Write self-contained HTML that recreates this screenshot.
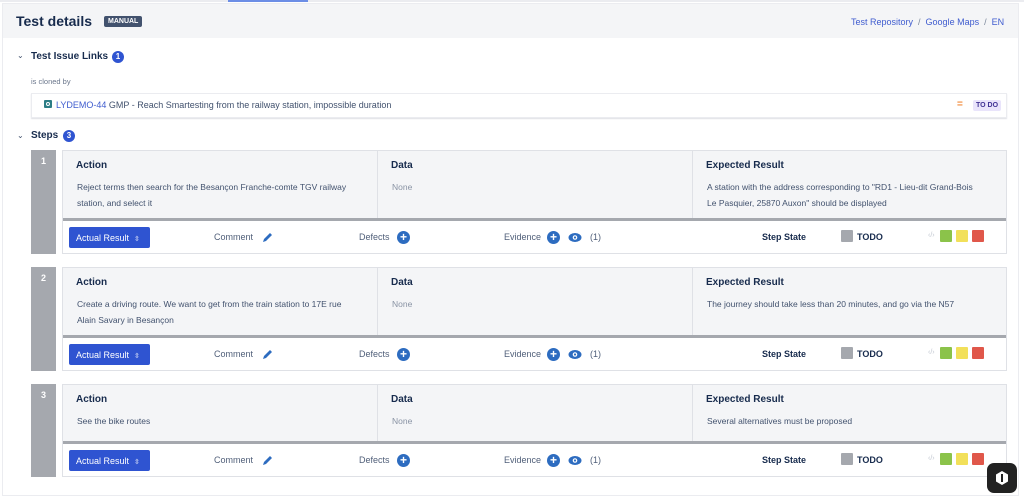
<!DOCTYPE html>
<html><head><meta charset="utf-8"><style>
*{box-sizing:border-box;margin:0;padding:0}
body{width:1024px;height:500px;background:#fff;font-family:"Liberation Sans",sans-serif;color:#172b4d;position:relative;overflow:hidden}
.a{position:absolute}
.topline{left:0;top:0;width:1024px;height:2px;background:#ebecf0}
.bluel{left:228px;top:0;width:80px;height:2px;background:#6c8ee6}
.wrap{left:2px;top:3px;width:1017px;height:493px;border:1px solid #ebecf0}
.hdr{left:3px;top:4px;width:1015px;height:34px;background:#f4f5f7}
.sm{font-size:9px}
.num{background:#a5a8ae;color:#fff;font-size:9px;font-weight:bold;text-align:center;padding-top:6px}
.tbl{border:1px solid #dfe1e6;background:#fff}
.th{background:#f4f5f7;border-bottom:3px solid #a5a8ae}
.col{position:absolute;top:0;bottom:0;border-right:1px solid #dfe1e6}
.col b{position:absolute;left:13px;top:9px;font-size:10px;color:#172b4d}
.col p{position:absolute;left:14px;top:28px;font-size:8.5px;line-height:16px;color:#42526e;width:290px}
.btn{position:absolute;left:6px;top:6px;width:81px;height:21px;background:#2f54d1;border-radius:2px;color:#fff;font-size:9px;padding:6px 0 0 7px}
.lab{position:absolute;font-size:9px;color:#505f79;top:11px}
.plus{position:absolute;width:13px;height:13px;border-radius:50%;background:#2d6cc0;color:#fff;font-size:12px;line-height:13px;text-align:center;font-weight:bold;top:10px}
.ic{position:absolute;top:10px}
.sq{position:absolute;width:12px;height:12px;top:9px;border-radius:1px}
</style></head><body>
<div class="a topline"></div><div class="a bluel"></div>
<div class="a wrap"></div>
<div class="a hdr"></div>
<div class="a" style="left:16px;top:13px;font-size:14px;font-weight:bold;color:#172b4d">Test details</div>
<div class="a" style="left:104px;top:16px;background:#42526e;color:#fff;font-size:7px;font-weight:bold;padding:2px 4px;border-radius:2px">MANUAL</div>
<div class="a sm" style="left:851px;top:17px;color:#3f5ccf">Test Repository &nbsp;<span style="color:#7a869a">/</span>&nbsp; Google Maps &nbsp;<span style="color:#7a869a">/</span>&nbsp; EN</div>

<div class="a" style="left:17px;top:51px;font-size:8px;color:#42526e">⌄</div>
<div class="a" style="left:31px;top:51px;font-size:10px;font-weight:bold">Test Issue Links</div>
<div class="a" style="left:112px;top:51px;width:12px;height:12px;border-radius:50%;background:#2f54d1;color:#fff;font-size:8px;text-align:center;line-height:12px;font-weight:bold">1</div>
<div class="a" style="left:31px;top:77px;font-size:7.5px;color:#6b778c">is cloned by</div>
<div class="a" style="left:31px;top:93px;width:976px;height:25px;border:1px solid #ebecf0;box-shadow:0 1px 1px #dfe1e6"></div>
<div class="a" style="left:44px;top:100px;width:8px;height:8px;background:#2c7d85;border-radius:1px"><div style="margin:2px;width:4px;height:4px;border:1px solid #fff;border-radius:50%"></div></div>
<div class="a sm" style="left:56px;top:100px"><span style="color:#3f5ccf">LYDEMO-44</span> <span style="color:#42526e">GMP - Reach Smartesting from the railway station, impossible duration</span></div>
<div class="a" style="left:957px;top:99px;color:#f28b3b;font-size:10px;font-weight:bold">=</div>
<div class="a" style="left:973px;top:100px;background:#e9e4fb;color:#403294;font-size:7px;font-weight:bold;padding:2px 3px;border-radius:2px">TO DO</div>

<div class="a" style="left:17px;top:131px;font-size:8px;color:#42526e">⌄</div>
<div class="a" style="left:31px;top:130px;font-size:10px;font-weight:bold">Steps</div>
<div class="a" style="left:63px;top:130px;width:12px;height:12px;border-radius:50%;background:#2f54d1;color:#fff;font-size:8px;text-align:center;line-height:12px;font-weight:bold">3</div>

<!-- step 1 -->
<div class="a num" style="left:31px;top:150px;width:25px;height:104px">1</div>
<div class="a tbl" style="left:62px;top:150px;width:945px;height:104px">
 <div class="a th" style="left:0;top:0;width:943px;height:70px">
  <div class="col" style="left:0;width:315px"><b>Action</b><p style="width:298px">Reject terms then search for the Besançon Franche-comte TGV railway station, and select it</p></div>
  <div class="col" style="left:315px;width:315px"><b>Data</b><p style="color:#8993a4">None</p></div>
  <div class="col" style="left:630px;width:313px;border:0"><b>Expected Result</b><p style="width:268px">A station with the address corresponding to "RD1 - Lieu-dit Grand-Bois Le Pasquier, 25870 Auxon" should be displayed</p></div>
 </div>
 <div class="a" style="left:0;top:70px;width:943px;height:33px">
  <div class="btn">Actual Result &nbsp;<span style="font-size:7px">⇳</span></div>
  <div class="lab" style="left:151px">Comment</div><svg class="ic" style="left:199px" width="12" height="12" viewBox="0 0 12 12"><path d="M1 11 L2 8 L8 2 L10 4 L4 10 Z" fill="#2d6cc0"/></svg>
  <div class="lab" style="left:296px">Defects</div><div class="plus" style="left:334px">+</div>
  <div class="lab" style="left:441px">Evidence</div><div class="plus" style="left:484px">+</div>
  <svg class="ic" style="left:505px;top:11px" width="14" height="11" viewBox="0 0 14 11"><ellipse cx="7" cy="5.5" rx="6.5" ry="4.5" fill="#2d6cc0"/><circle cx="7" cy="5.5" r="2.3" fill="#fff"/><circle cx="7" cy="5.5" r="1.1" fill="#2d6cc0"/></svg><div class="lab" style="left:527px">(1)</div>
  <div class="lab" style="left:699px;font-weight:bold;color:#172b4d">Step State</div>
  <div class="sq" style="left:778px;background:#a5a8ae"></div><div class="lab" style="left:794px;font-weight:bold;color:#172b4d">TODO</div>
  <div class="lab" style="left:865px;color:#c1c7d0;font-size:7px">‹/›</div>
  <div class="sq" style="left:877px;background:#8bc34a"></div><div class="sq" style="left:893px;background:#f2e05a"></div><div class="sq" style="left:909px;background:#e0574a"></div>
 </div>
</div>

<!-- step 2 -->
<div class="a num" style="left:31px;top:267px;width:25px;height:104px">2</div>
<div class="a tbl" style="left:62px;top:267px;width:945px;height:104px">
 <div class="a th" style="left:0;top:0;width:943px;height:70px">
  <div class="col" style="left:0;width:315px"><b>Action</b><p style="width:280px">Create a driving route. We want to get from the train station to 17E rue Alain Savary in Besançon</p></div>
  <div class="col" style="left:315px;width:315px"><b>Data</b><p style="color:#8993a4">None</p></div>
  <div class="col" style="left:630px;width:313px;border:0"><b>Expected Result</b><p style="width:300px">The journey should take less than 20 minutes, and go via the N57</p></div>
 </div>
 <div class="a" style="left:0;top:70px;width:943px;height:33px">
  <div class="btn">Actual Result &nbsp;<span style="font-size:7px">⇳</span></div>
  <div class="lab" style="left:151px">Comment</div><svg class="ic" style="left:199px" width="12" height="12" viewBox="0 0 12 12"><path d="M1 11 L2 8 L8 2 L10 4 L4 10 Z" fill="#2d6cc0"/></svg>
  <div class="lab" style="left:296px">Defects</div><div class="plus" style="left:334px">+</div>
  <div class="lab" style="left:441px">Evidence</div><div class="plus" style="left:484px">+</div>
  <svg class="ic" style="left:505px;top:11px" width="14" height="11" viewBox="0 0 14 11"><ellipse cx="7" cy="5.5" rx="6.5" ry="4.5" fill="#2d6cc0"/><circle cx="7" cy="5.5" r="2.3" fill="#fff"/><circle cx="7" cy="5.5" r="1.1" fill="#2d6cc0"/></svg><div class="lab" style="left:527px">(1)</div>
  <div class="lab" style="left:699px;font-weight:bold;color:#172b4d">Step State</div>
  <div class="sq" style="left:778px;background:#a5a8ae"></div><div class="lab" style="left:794px;font-weight:bold;color:#172b4d">TODO</div>
  <div class="lab" style="left:865px;color:#c1c7d0;font-size:7px">‹/›</div>
  <div class="sq" style="left:877px;background:#8bc34a"></div><div class="sq" style="left:893px;background:#f2e05a"></div><div class="sq" style="left:909px;background:#e0574a"></div>
 </div>
</div>

<!-- step 3 -->
<div class="a num" style="left:31px;top:384px;width:25px;height:93px">3</div>
<div class="a tbl" style="left:62px;top:384px;width:945px;height:93px">
 <div class="a th" style="left:0;top:0;width:943px;height:59px">
  <div class="col" style="left:0;width:315px"><b>Action</b><p>See the bike routes</p></div>
  <div class="col" style="left:315px;width:315px"><b>Data</b><p style="color:#8993a4">None</p></div>
  <div class="col" style="left:630px;width:313px;border:0"><b>Expected Result</b><p style="width:300px">Several alternatives must be proposed</p></div>
 </div>
 <div class="a" style="left:0;top:59px;width:943px;height:33px">
  <div class="btn">Actual Result &nbsp;<span style="font-size:7px">⇳</span></div>
  <div class="lab" style="left:151px">Comment</div><svg class="ic" style="left:199px" width="12" height="12" viewBox="0 0 12 12"><path d="M1 11 L2 8 L8 2 L10 4 L4 10 Z" fill="#2d6cc0"/></svg>
  <div class="lab" style="left:296px">Defects</div><div class="plus" style="left:334px">+</div>
  <div class="lab" style="left:441px">Evidence</div><div class="plus" style="left:484px">+</div>
  <svg class="ic" style="left:505px;top:11px" width="14" height="11" viewBox="0 0 14 11"><ellipse cx="7" cy="5.5" rx="6.5" ry="4.5" fill="#2d6cc0"/><circle cx="7" cy="5.5" r="2.3" fill="#fff"/><circle cx="7" cy="5.5" r="1.1" fill="#2d6cc0"/></svg><div class="lab" style="left:527px">(1)</div>
  <div class="lab" style="left:699px;font-weight:bold;color:#172b4d">Step State</div>
  <div class="sq" style="left:778px;background:#a5a8ae"></div><div class="lab" style="left:794px;font-weight:bold;color:#172b4d">TODO</div>
  <div class="lab" style="left:865px;color:#c1c7d0;font-size:7px">‹/›</div>
  <div class="sq" style="left:877px;background:#8bc34a"></div><div class="sq" style="left:893px;background:#f2e05a"></div><div class="sq" style="left:909px;background:#e0574a"></div>
 </div>
</div>

<div class="a" style="left:987px;top:463px;width:30px;height:30px;background:#222;border-radius:7px">
 <svg width="30" height="30" viewBox="0 0 30 30"><path d="M15 8 L21 11.5 L21 18.5 L15 22 L9 18.5 L9 11.5 Z" fill="#fff"/><path d="M15 11 L15 19" stroke="#222" stroke-width="2"/></svg>
</div>
</body></html>
